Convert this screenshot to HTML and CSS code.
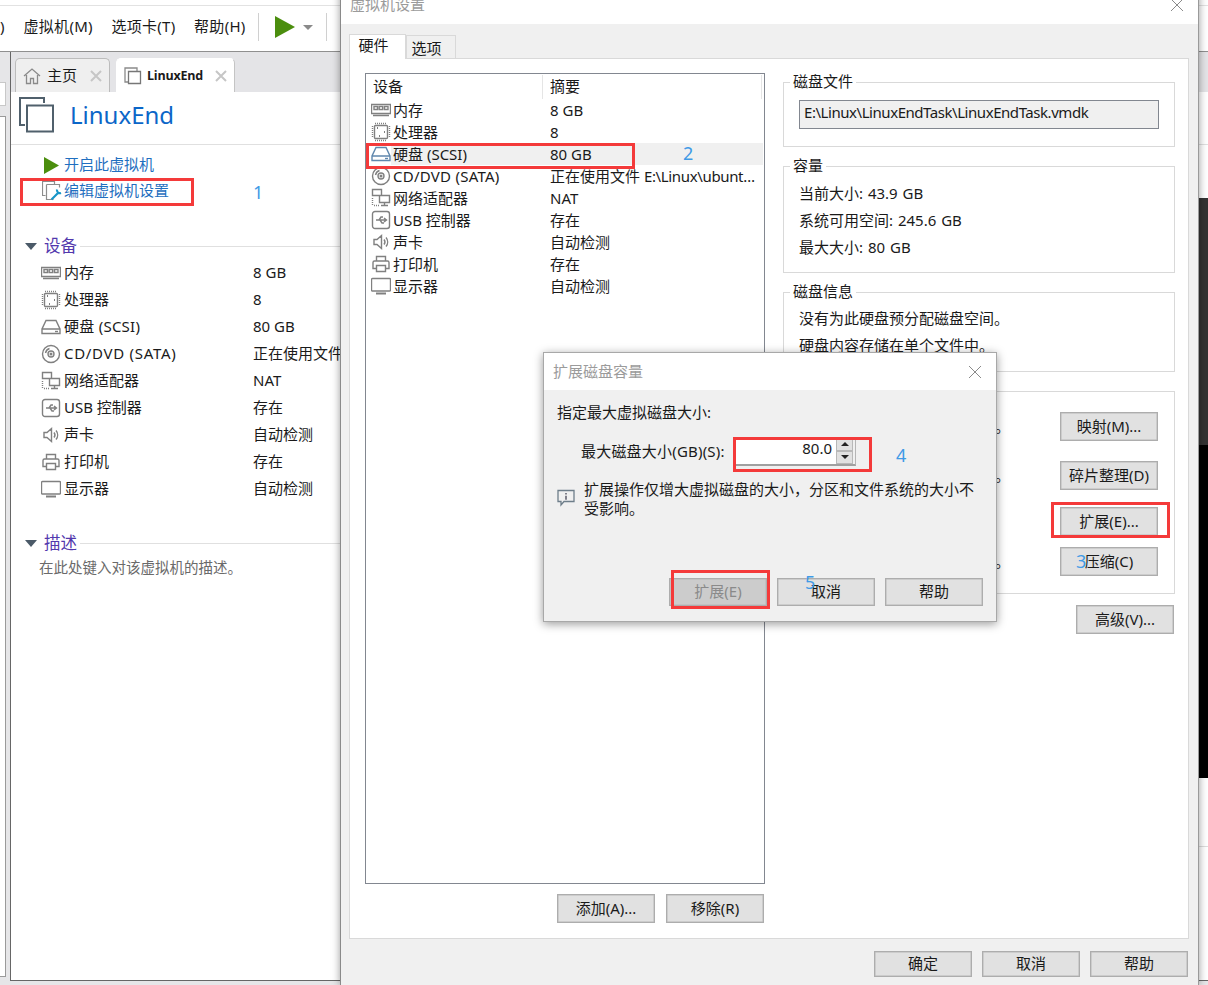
FILE: index.html
```html
<!DOCTYPE html>
<html lang="zh-CN">
<head>
<meta charset="utf-8">
<title>虚拟机设置</title>
<link rel="stylesheet" href="styles.css">
</head>
<body>
<svg class="defs" width="0" height="0" aria-hidden="true">
  <symbol id="i-mem" viewBox="0 0 20 20"><path d="M.5 4.500h19v9h-19zM2 15.500h16"/><path d="M3 6.500h3.500v3H3zM8.200 6.500h3.500v3H8.200zM13.500 6.500H17v3h-3.500z"/></symbol>
  <symbol id="i-cpu" viewBox="0 0 20 20"><rect x="3.500" y="3.500" width="13" height="13" rx="1"/><path stroke-dasharray="1 1" d="M4 1.500h12M4 18.500h12M1.500 4v12M18.500 4v12"/><path stroke-width="2" d="M6 6h1M13 10h1M8 14h1"/></symbol>
  <symbol id="i-hdd" viewBox="0 0 20 20"><path d="M5 3.500h10l4 8.500v4.500H1V12zM1 12h18"/><path d="M14 14.500h3"/></symbol>
  <symbol id="i-cd" viewBox="0 0 20 20"><circle cx="10" cy="10" r="8.500"/><circle cx="10" cy="10" r="3"/><circle cx="10" cy="10" r=".8"/><path d="M4.500 9a6 6 0 0 1 4-4.500"/></symbol>
  <symbol id="i-net" viewBox="0 0 20 20"><path d="M1.500 1.500h9v6h-9zM8.500 7.500h10v7h-10zM13.500 14.500v3M10 17.500h7"/><path stroke-dasharray="1 1" d="M1.500 10v8M3 17.500h5"/></symbol>
  <symbol id="i-usb" viewBox="0 0 20 20"><rect x="1.500" y="1.500" width="17" height="17" rx="2.500"/><path d="M5 10h10M13 8l2.500 2-2.500 2M8 10l2-3h2M9 10l2 3h2"/></symbol>
  <symbol id="i-snd" viewBox="0 0 20 20"><path d="M3 7.500h3L10.500 3.500v13L6 12.500H3zM13 7.500a4 4 0 0 1 0 5M15 5.500a7 7 0 0 1 0 9"/></symbol>
  <symbol id="i-prt" viewBox="0 0 20 20"><path d="M5.500 7V2.500h9V7M5 14.500H2V8.500A1.500 1.500 0 0 1 3.500 7h13A1.500 1.500 0 0 1 18 8.500v6h-3"/><path d="M5.500 11.500h9v6h-9z"/></symbol>
  <symbol id="i-mon" viewBox="0 0 20 20"><rect x=".5" y="2.500" width="19" height="12.500" rx="1"/><path stroke-width="2" d="M5 17.500h10"/></symbol>
</svg>

<div class="app">
  <div class="app-top"></div>
  <div class="menubar">
    <span class="menu-clip">)</span>
    <span>虚拟机(M)</span>
    <span>选项卡(T)</span>
    <span>帮助(H)</span>
    <i class="tool-sep"></i>
    <svg class="tool-play" viewBox="0 0 20 22"><path d="M0 0l20 11L0 22z"/></svg>
    <i class="caret"></i>
    <i class="tool-sep tool-sep-b"></i>
  </div>
  <div class="workspace">
    <div class="library">
      <div class="lib-search"></div>
      <div class="lib-tree"></div>
    </div>
    <div class="main">
      <div class="tabs">
        <div class="tab">
          <svg class="tab-icon" viewBox="0 0 18 18"><path d="M1 9l8-7 8 7M3.500 8v8.500h4v-5h3v5h4V8"/></svg>
          <span>主页</span>
          <svg class="tab-x" viewBox="0 0 12 12"><path d="M1 1l10 10M11 1L1 11"/></svg>
        </div>
        <div class="tab tab-on">
          <svg class="tab-icon" viewBox="0 0 18 18"><path d="M4 15H1V1h12v3"/><path class="vm-front" d="M4.500 4.500h12v12h-12z"/></svg>
          <b>LinuxEnd</b>
          <svg class="tab-x" viewBox="0 0 12 12"><path d="M1 1l10 10M11 1L1 11"/></svg>
        </div>
      </div>
      <div class="vm-head">
        <svg class="vm-icon" viewBox="0 0 36 36"><path d="M6 28H1V1h24v5"/><path d="M8 8.500h26v26H8z"/></svg>
        <span class="vm-name">LinuxEnd</span>
      </div>
      <div class="content">
        <div class="details">
          <div class="actions">
            <div class="action">
              <svg class="act-icon" viewBox="0 0 17 17"><path class="play-fill" d="M1 0l15 8.500L1 17z"/></svg>
              <span>开启此虚拟机</span>
            </div>
            <div class="action">
              <svg class="act-icon" viewBox="0 0 20 20"><path class="ed-a" d="M3.500 14.500H.5V.5h12v2.500M4.500 3.500h13v3M4.500 3.500v15h7"/><path class="ed-b" d="M9.500 18.500l7-7M15 8.500a3 3 0 0 0 4 3.500"/></svg>
              <span>编辑虚拟机设置</span>
            </div>
          </div>
          <div class="sec-head"><i class="sec-arrow"></i><span>设备</span><i class="sec-line"></i></div>
          <div class="dev"><svg class="ic"><use href="#i-mem"/></svg><span>内存</span><span>8 GB</span></div>
          <div class="dev"><svg class="ic"><use href="#i-cpu"/></svg><span>处理器</span><span>8</span></div>
          <div class="dev"><svg class="ic"><use href="#i-hdd"/></svg><span class="wide-s">硬盘 (SCSI)</span><span>80 GB</span></div>
          <div class="dev"><svg class="ic"><use href="#i-cd"/></svg><span class="wide-l">CD/DVD (SATA)</span><span>正在使用文件 E:\Linux\ubuntu.iso</span></div>
          <div class="dev"><svg class="ic"><use href="#i-net"/></svg><span>网络适配器</span><span>NAT</span></div>
          <div class="dev"><svg class="ic"><use href="#i-usb"/></svg><span>USB 控制器</span><span>存在</span></div>
          <div class="dev"><svg class="ic"><use href="#i-snd"/></svg><span>声卡</span><span>自动检测</span></div>
          <div class="dev"><svg class="ic"><use href="#i-prt"/></svg><span>打印机</span><span>存在</span></div>
          <div class="dev"><svg class="ic"><use href="#i-mon"/></svg><span>显示器</span><span>自动检测</span></div>
          <div class="sec-head sec-desc"><i class="sec-arrow"></i><span>描述</span><i class="sec-line"></i></div>
          <div class="desc">在此处键入对该虚拟机的描述。</div>
        </div>
        <div class="preview">
          <div class="shot"></div>
          <div class="shot-rule"></div>
        </div>
      </div>
    </div>
  </div>
</div>

<div class="window settings">
  <div class="win-title">
    <span>虚拟机设置</span>
    <svg class="win-x" viewBox="0 0 14 14"><path d="M1 1l12 12M13 1L1 13"/></svg>
  </div>
  <div class="set-tabs">
    <div class="set-tab set-tab-on">硬件</div>
    <div class="set-tab">选项</div>
  </div>
  <div class="set-panel">
    <div class="set-left">
      <div class="list">
        <div class="list-head"><span>设备</span><span>摘要</span></div>
        <div class="row"><svg class="ic"><use href="#i-mem"/></svg><span>内存</span><span>8 GB</span></div>
        <div class="row"><svg class="ic"><use href="#i-cpu"/></svg><span>处理器</span><span>8</span></div>
        <div class="row row-sel"><svg class="ic ic-sel"><use href="#i-hdd"/></svg><span>硬盘 (SCSI)</span><span>80 GB</span></div>
        <div class="row"><svg class="ic"><use href="#i-cd"/></svg><span class="wide-t">CD/DVD (SATA)</span><span>正在使用文件 <em class="tight">E:\Linux\ubunt…</em></span></div>
        <div class="row"><svg class="ic"><use href="#i-net"/></svg><span>网络适配器</span><span>NAT</span></div>
        <div class="row"><svg class="ic"><use href="#i-usb"/></svg><span>USB 控制器</span><span>存在</span></div>
        <div class="row"><svg class="ic"><use href="#i-snd"/></svg><span>声卡</span><span>自动检测</span></div>
        <div class="row"><svg class="ic"><use href="#i-prt"/></svg><span>打印机</span><span>存在</span></div>
        <div class="row"><svg class="ic"><use href="#i-mon"/></svg><span>显示器</span><span>自动检测</span></div>
      </div>
      <div class="list-btns">
        <button class="btn">添加(A)...</button>
        <button class="btn">移除(R)</button>
      </div>
    </div>
    <div class="set-right">
      <div class="group g-file">
        <div class="legend">磁盘文件</div>
        <div class="path">E:\Linux\LinuxEndTask\LinuxEndTask.vmdk</div>
      </div>
      <div class="group g-cap">
        <div class="legend">容量</div>
        <div class="line">当前大小: 43.9 GB</div>
        <div class="line">系统可用空间: 245.6 GB</div>
        <div class="line">最大大小: 80 GB</div>
      </div>
      <div class="group g-info">
        <div class="legend">磁盘信息</div>
        <div class="line">没有为此硬盘预分配磁盘空间。</div>
        <div class="line">硬盘内容存储在单个文件中。</div>
      </div>
      <div class="group g-util">
        <div class="util u1"><span class="note">将此虚拟磁盘映射到本地卷。</span><button class="btn">映射(M)...</button></div>
        <div class="util u2"><span class="note">整理文件碎片并整合可用空间。</span><button class="btn">碎片整理(D)</button></div>
        <div class="util u3"><span class="note note-short">扩展磁盘容量</span><button class="btn">扩展(E)...</button></div>
        <div class="util"><span class="note">压缩磁盘以回收未使用的空间。</span><button class="btn">压缩(C)</button></div>
      </div>
      <div class="adv"><button class="btn">高级(V)...</button></div>
    </div>
  </div>
  <div class="set-foot">
    <button class="btn btn-foot">确定</button>
    <button class="btn btn-foot">取消</button>
    <button class="btn btn-foot">帮助</button>
  </div>
</div>

<div class="window expand">
  <div class="exp-title">
    <span>扩展磁盘容量</span>
    <svg class="exp-x" viewBox="0 0 14 14"><path d="M1 1l12 12M13 1L1 13"/></svg>
  </div>
  <div class="exp-body">
    <div class="exp-line">指定最大虚拟磁盘大小:</div>
    <div class="exp-size">
      <span class="exp-label">最大磁盘大小(GB)(S):</span>
      <div class="spin">
        <span class="spin-val">80.0</span>
        <div class="spin-btns">
          <span class="spin-b"><i class="tri-up"></i></span>
          <span class="spin-b"><i class="tri-down"></i></span>
        </div>
      </div>
    </div>
    <div class="exp-note">
      <svg class="info" viewBox="0 0 18 18"><path d="M1 1.500h16v11H7l-3 3.500v-3.500H1z"/><path class="info-i" d="M9 4v1.500M9 6.800v4"/></svg>
      <p>扩展操作仅增大虚拟磁盘的大小，分区和文件系统的大小不<br>受影响。</p>
    </div>
    <div class="exp-foot">
      <button class="btn btn-off">扩展(E)</button>
      <button class="btn">取消</button>
      <button class="btn">帮助</button>
    </div>
  </div>
</div>

<div class="mark m1"></div>
<div class="mark m2"></div>
<div class="mark m3"></div>
<div class="mark m4"></div>
<div class="mark m5"></div>
<span class="num n1">1</span>
<span class="num n2">2</span>
<span class="num n3">3</span>
<span class="num n4">4</span>
<span class="num n5">5</span>
</body>
</html>
```
FILE: styles.css
```css
* { box-sizing: border-box; }
html, body { margin: 0; padding: 0; }
body {
  position: relative;
  width: 1208px;
  height: 985px;
  overflow: hidden;
  background: #fff;
  color: #1a1a1a;
  font: 15px/1.3 "Noto Sans", "Noto Sans CJK SC", sans-serif;
}
.defs { position: absolute; }
svg { display: block; flex: none; }

/* background app window */
.app { position: absolute; inset: 0; display: flex; flex-direction: column; }
.app-top { height: 6px; border-bottom: 1px solid #e2e2e2; }
.menubar {
  height: 45px;
  flex: none;
  display: flex;
  align-items: center;
  gap: 18.500px;
  padding-bottom: 3px;
  white-space: nowrap;
  letter-spacing: .3px;
}
.menu-clip { width: 5px; }
.tool-sep { width: 1px; height: 28px; background: #d0d0d0; margin-left: -6px; }
.tool-sep-b { margin-left: -6px; }
.tool-play { width: 20px; height: 22px; margin-left: -3px; }
.tool-play path, .play-fill { fill: #4b8e0e; }
.caret { width: 0; height: 0; margin-left: -10px; border: 5px solid transparent; border-top: 5px solid #8a8a8a; border-bottom: 0; }

.workspace { flex: 1; display: flex; min-height: 0; border-top: 1px solid #8f8f8f; background: #e6e6e8; }
.library { width: 10px; flex: none; padding-top: 30px; }
.lib-search { width: 6px; height: 24px; background: #fff; border: 1px solid #c8c8c8; border-left: 0; }
.lib-tree { width: 6px; height: 861px; margin-top: 10px; background: #fff; border: 1px solid #9a9a9a; border-left: 0; }

.main { flex: 1; display: flex; flex-direction: column; margin-bottom: 4px; border-left: 1px solid #666; border-bottom: 1px solid #666; background: #fff; min-width: 0; }
.tabs { height: 40px; flex: none; display: flex; gap: 6px; padding: 6px 0 0 4px; background: #e4e4e7; }
.tab {
  height: 34px;
  display: flex;
  align-items: center;
  width: 95px;
  padding: 0 7px;
  background: #efefef;
  border: 1px solid #bcbcbc;
  border-bottom: 0;
  border-radius: 5px 5px 0 0;
}
.tab-on { width: 119px; background: #fff; border-color: #fff #c4c4c4 #fff #fff; }
.tab-on b { font-size: 12.500px; font-weight: 700; font-family: "Open Sans", "Noto Sans", sans-serif; margin: 1px 0 0 -1px; letter-spacing: -.2px; }
.tab-icon { width: 18px; height: 18px; margin-right: 6px; fill: none; stroke: #8a8a8a; stroke-width: 1.300; }
.vm-front { stroke: #777; }
.tab-x { width: 12px; height: 12px; margin-left: auto; fill: none; stroke: #c6c6c6; stroke-width: 2; }

.vm-head { height: 53px; flex: none; display: flex; align-items: center; gap: 15px; padding: 0 0 6px 8px; border-bottom: 1px solid #e0e0e0; }
.vm-icon { width: 36px; height: 36px; fill: none; stroke: #50606c; stroke-width: 2; }
.vm-name { font-size: 24px; line-height: 30px; color: #0b66c8; }

.content { flex: 1; display: flex; min-height: 0; }
.details { flex: 1; padding-top: 7px; white-space: nowrap; min-width: 0; overflow: hidden; }
.preview { width: 9px; flex: none; padding-top: 53px; }
.shot { height: 580px; background: linear-gradient(#333 0, #333 247px, #000 247px); }
.shot-rule { height: 0; margin-top: 68px; border-top: 1px solid #ddd; }

.actions { padding-left: 32px; }
.action { height: 26px; display: flex; align-items: center; gap: 4px; color: #1f6fc0; }
.act-icon { width: 17px; height: 17px; }
.action:last-child .act-icon { width: 20px; height: 20px; margin-left: -1px; margin-right: -2px; fill: none; }
.ed-a { fill: none; stroke: #8d8d8d; stroke-width: 1.200; }
.ed-b { fill: none; stroke: #1896c8; stroke-width: 2.200; }

.sec-head { height: 26px; margin-top: 29px; display: flex; align-items: center; padding-left: 14px; font-size: 16.500px; color: #5238ad; }
.sec-desc { margin-top: 28px; }
.sec-arrow { width: 0; height: 0; margin-right: 7px; border: 6px solid transparent; border-top: 7px solid #4b5a68; border-bottom: 0; }
.sec-line { flex: 1; height: 1px; margin-left: 3px; background: #e0e0e0; }
.dev { height: 27px; display: grid; grid-template-columns: 23px 189px 1fr; align-items: center; padding-left: 30px; }
.wide-s { letter-spacing: .25px; }
.wide-l { letter-spacing: .7px; }
.wide-t { letter-spacing: .25px; }
.desc { height: 22px; line-height: 22px; padding-left: 28px; font-size: 14.500px; color: #6a6a6a; }

.ic { width: 20px; height: 20px; fill: none; stroke: #808080; stroke-width: 1.400; }
.ic-sel { stroke: #5f87ad; }

/* free-floating windows */
.window { position: absolute; }
.settings {
  left: 340px;
  top: -14px;
  width: 859px;
  height: 999px;
  display: flex;
  flex-direction: column;
  background: #f0f0f0;
  border-left: 1px solid #8a8a8a;
  border-right: 1px solid #9a9a9a;
  box-shadow: 0 0 8px rgba(0, 0, 0, .4);
}
.win-title { height: 38px; flex: none; display: flex; align-items: center; justify-content: space-between; padding: 0 14px 0 9px; background: #fff; color: #9b9b9b; }
.win-x { width: 14px; height: 14px; fill: none; stroke: #8a8a8a; stroke-width: 1; }
.set-tabs { height: 34px; flex: none; display: flex; align-items: flex-end; padding-left: 8px; }
.set-tab { width: 50px; height: 23px; line-height: 24px; padding-right: 9px; text-align: center; background: #f0f0f0; border: 1px solid #d9d9d9; border-bottom: 0; }
.set-tab-on { position: relative; z-index: 1; width: 57px; height: 25px; line-height: 20px; padding-right: 8px; margin-bottom: -1px; background: #fff; }
.set-panel { width: 840px; height: 881px; flex: none; margin-left: 8px; display: flex; background: #fff; border: 1px solid #d9d9d9; }
.set-left { width: 415px; padding: 14px 0 0 15px; flex: none; }
.list { width: 400px; height: 811px; border: 1px solid #828790; }
.list-head { height: 25px; display: grid; grid-template-columns: 177px 219px 1fr; align-items: center; }
.list-head span { height: 24px; line-height: 23px; padding-left: 7px; border-right: 1px solid #e5e5e5; }
.row { height: 22px; margin-right: 1px; display: grid; grid-template-columns: 25px 159px 1fr; align-items: stretch; line-height: 22px; white-space: nowrap; }
.row .ic { margin: 1px 0 0 5px; }
.row span { padding-left: 2px; }
.row span:last-child { padding-left: 0; }
.row-sel span { background: #f0f0f0; }
.tight { font-style: normal; letter-spacing: -.35px; }
.list-btns { display: flex; justify-content: flex-end; gap: 11px; margin-top: 10px; padding-right: 1px; }

.btn {
  width: 98px;
  height: 29px;
  padding: 0 0 2px;
  background: #e1e1e1;
  border: 1px solid #adadad;
  box-shadow: inset 0 0 0 .5px #b8b8b8;
  color: #1a1a1a;
  font: inherit;
  line-height: 24px;
}
.btn-foot { height: 26px; line-height: 22px; }
.btn-off { background: #cccccc; color: #8a8a8a; }

.set-right { width: 392px; margin-left: 18px; padding-top: 23px; display: flex; flex-direction: column; gap: 19px; flex: none; }
.group { border: 1px solid #d9d9d9; }
.legend { width: max-content; height: 20px; line-height: 17px; margin: -10px 0 0 6px; padding: 0 3px; background: #fff; }
.g-file { height: 65px; }
.path { width: 360px; height: 29px; margin: 7px 0 0 15px; padding-left: 4px; line-height: 22px; letter-spacing: -.45px; background: #f0f0f0; border: 1px solid #828790; white-space: nowrap; }
.g-cap { height: 107px; }
.line { height: 27px; line-height: 27px; margin-left: 15px; white-space: nowrap; word-spacing: 1px; }
.legend + .line { margin-top: 3px; }
.g-info { height: 80px; }
.g-info .legend + .line { margin-top: 2px; }
.g-util { height: 203px; padding: 20px 16px 0 0; }
.util { display: flex; justify-content: space-between; height: 29px; align-items: center; }
.u1 { margin-bottom: 20px; }
.u2 { margin-bottom: 17px; }
.u3 { margin-bottom: 11px; }
.note { width: 211px; margin-left: 15px; text-align: right; white-space: nowrap; }
.note-short { text-align: left; }
.adv { display: flex; justify-content: flex-end; margin-top: -8px; padding-right: 1px; }

.set-foot { flex: 1; display: flex; justify-content: flex-end; gap: 10px; padding: 12px 10px 0 0; }

.expand {
  left: 543px;
  top: 352px;
  width: 454px;
  height: 270px;
  display: flex;
  flex-direction: column;
  background: #f0f0f0;
  border: 1px solid #a8a8a8;
  box-shadow: 0 2px 9px rgba(0, 0, 0, .4);
}
.exp-title { height: 37px; flex: none; display: flex; align-items: center; justify-content: space-between; padding: 1px 14px 0 9px; background: #fff; color: #9b9b9b; }
.exp-x { width: 14px; height: 14px; fill: none; stroke: #8a8a8a; stroke-width: 1; }
.exp-body { flex: 1; display: flex; flex-direction: column; padding: 12px 13px 15px; }
.exp-line { height: 20px; line-height: 20px; }
.exp-size { height: 29px; margin-top: 15px; padding-left: 24px; display: flex; align-items: center; }
.exp-label { width: 154px; white-space: nowrap; letter-spacing: .2px; }
.spin { width: 121px; height: 29px; display: flex; background: linear-gradient(90deg, #fff 0, #fff 101px, #f0f0f0 101px); border-bottom: 2px solid #a0a0a0; border-right: 1px solid #b5b5b5; }
.spin-val { width: 97px; height: 24px; line-height: 23px; text-align: right; }
.spin-btns { margin-left: 4px; width: 17px; display: flex; flex-direction: column; }
.spin-b { height: 14px; display: flex; align-items: center; justify-content: center; background: #e1e1e1; border: 1px solid #b8b8b8; }
.tri-up, .tri-down { width: 0; height: 0; border: 4px solid transparent; }
.tri-up { border-bottom: 4px solid #222; border-top: 0; }
.tri-down { border-top: 4px solid #222; border-bottom: 0; }
.exp-note { display: flex; gap: 9px; margin-top: 14px; align-items: flex-start; }
.exp-note p { margin: 0; line-height: 19px; white-space: nowrap; }
.info { width: 18px; height: 18px; margin-top: 9px; fill: none; stroke: #6e7e8a; stroke-width: 1.300; }
.info-i { stroke: #445; }
.exp-foot { margin-top: auto; display: flex; justify-content: flex-end; gap: 10px; }
.exp-foot .btn { height: 28px; }

/* annotations drawn over the screenshot */
.mark { position: absolute; border: 3px solid #f43a3a; }
.m1 { left: 20px; top: 178px; width: 174px; height: 28px; }
.m2 { left: 366px; top: 143px; width: 269px; height: 26px; }
.m3 { left: 1051px; top: 502px; width: 119px; height: 36px; }
.m4 { left: 733px; top: 437px; width: 139px; height: 35px; }
.m5 { left: 671px; top: 570px; width: 99px; height: 39px; }
.num { position: absolute; font-size: 18px; line-height: 20px; color: #3f9ae6; }
.n1 { left: 253px; top: 182px; }
.n2 { left: 683px; top: 143px; }
.n3 { left: 1076px; top: 551px; }
.n4 { left: 896px; top: 445px; }
.n5 { left: 805px; top: 572px; }
```
